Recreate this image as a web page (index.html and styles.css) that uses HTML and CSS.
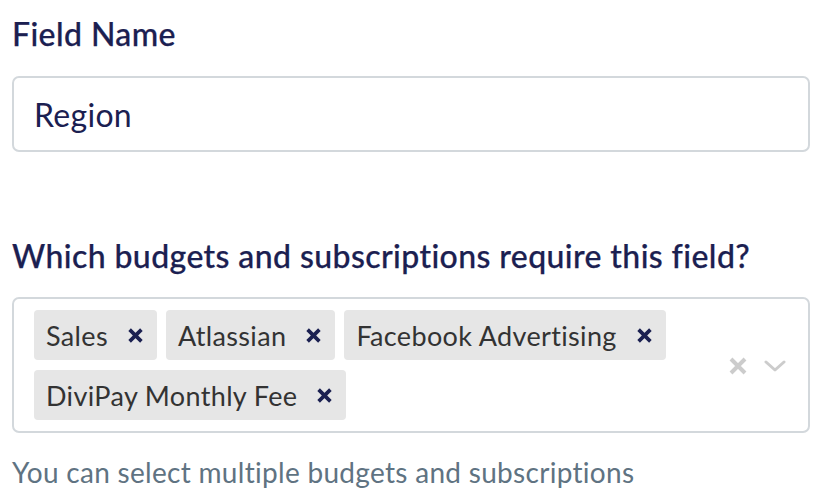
FILE: index.html
```html
<!DOCTYPE html>
<html lang="en">
<head>
<meta charset="utf-8">
<title>Field</title>
<link rel="stylesheet" href="styles.css">
</head>
<body>
<div class="form">
  <div class="field field-first">
    <label class="label">Field Name</label>
    <div class="input">Region</div>
  </div>
  <div class="field field-select">
    <label class="label">Which budgets and subscriptions require this field?</label>
    <div class="select">
      <div class="values">
        <div class="tag"><span class="tag-label">Sales</span><span class="tag-remove"><svg viewBox="0 0 14 14" width="15" height="15"><path d="M1.5 1.5 L12.5 12.5 M12.5 1.5 L1.5 12.5" stroke="currentColor" stroke-width="3.4" fill="none"/></svg></span></div>
        <div class="tag"><span class="tag-label">Atlassian</span><span class="tag-remove"><svg viewBox="0 0 14 14" width="15" height="15"><path d="M1.5 1.5 L12.5 12.5 M12.5 1.5 L1.5 12.5" stroke="currentColor" stroke-width="3.4" fill="none"/></svg></span></div>
        <div class="tag"><span class="tag-label">Facebook Advertising</span><span class="tag-remove"><svg viewBox="0 0 14 14" width="15" height="15"><path d="M1.5 1.5 L12.5 12.5 M12.5 1.5 L1.5 12.5" stroke="currentColor" stroke-width="3.4" fill="none"/></svg></span></div>
        <div class="tag"><span class="tag-label">DiviPay Monthly Fee</span><span class="tag-remove"><svg viewBox="0 0 14 14" width="15" height="15"><path d="M1.5 1.5 L12.5 12.5 M12.5 1.5 L1.5 12.5" stroke="currentColor" stroke-width="3.4" fill="none"/></svg></span></div>
      </div>
      <div class="indicators">
        <svg class="clear" viewBox="0 0 18 18" width="18" height="18"><path d="M2 2 L16 16 M16 2 L2 16" stroke="currentColor" stroke-width="4" fill="none"/></svg>
        <svg class="chevron" viewBox="0 0 22 12" width="22" height="12"><path d="M2 2 L11 10 L20 2" stroke="currentColor" stroke-width="3" fill="none" stroke-linejoin="round" stroke-linecap="round"/></svg>
      </div>
    </div>
    <p class="help">You can select multiple budgets and subscriptions</p>
  </div>
</div>
</body>
</html>
```

FILE: styles.css
```css
html, body {
  margin: 0;
  padding: 0;
  background: #ffffff;
}
body {
  font-family: Lato, "Noto Sans", sans-serif;
}
.form {
  width: 798px;
  margin-left: 12px;
}
.label {
  display: block;
  font-size: 32px;
  line-height: 36px;
  font-weight: 500;
  color: #1b2051;
  letter-spacing: 0.4px;
  -webkit-text-stroke: 0.25px #1b2051;
}
.field-first {
  padding-top: 16px;
}
.input {
  margin-top: 24px;
  box-sizing: border-box;
  height: 76px;
  border: 2px solid #d3d8dc;
  border-radius: 7px;
  padding: 0 20px;
  display: flex;
  align-items: center;
  font-size: 32px;
  color: #1b2051;
  letter-spacing: 0.3px;
}
.field-select {
  margin-top: 86px;
}
.select {
  margin-top: 23px;
  box-sizing: border-box;
  height: 136px;
  border: 2px solid #d3d8dc;
  border-radius: 7px;
  display: flex;
  align-items: center;
  padding: 11px 22px 11px 20px;
}
.values {
  flex: 1;
  display: flex;
  flex-wrap: wrap;
  gap: 10px 9px;
}
.tag {
  height: 50px;
  background: #e6e6e6;
  border-radius: 4px;
  display: flex;
  align-items: center;
}
.tag-label {
  font-size: 27px;
  color: #333333;
  padding-left: 12px;
  letter-spacing: 0.35px;
}
.tag-remove {
  display: flex;
  align-items: center;
  padding: 0 14px 0 20px;
  color: #1b2051;
}
.indicators {
  display: flex;
  align-items: center;
  gap: 17px;
  color: #cccccc;
  margin-top: 2px;
}
.help {
  margin: 22px 0 0;
  font-size: 28px;
  color: #5f7382;
  letter-spacing: 0.3px;
}
```
